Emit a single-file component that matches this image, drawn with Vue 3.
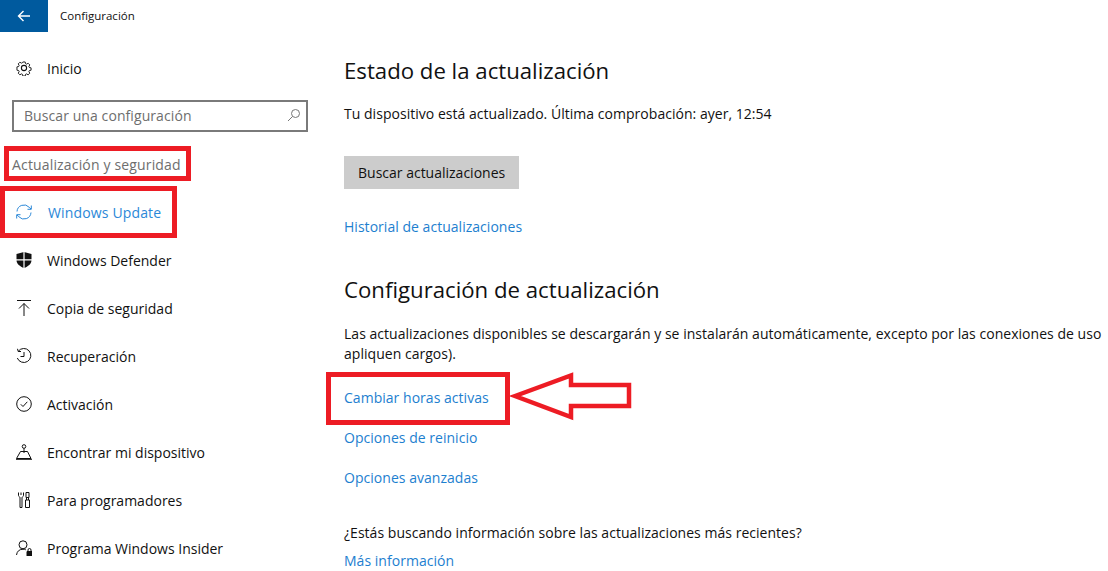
<script setup>
const navItems = [
  { label: 'Windows Update', icon: 'update', active: true },
  { label: 'Windows Defender', icon: 'shield' },
  { label: 'Copia de seguridad', icon: 'backup' },
  { label: 'Recuperación', icon: 'history' },
  { label: 'Activación', icon: 'check' },
  { label: 'Encontrar mi dispositivo', icon: 'find' },
  { label: 'Para programadores', icon: 'dev' },
  { label: 'Programa Windows Insider', icon: 'insider' }
]
</script>

<template>
  <div class="page">
    <header class="titlebar">
      <button class="back">
        <svg width="16" height="16" viewBox="0 0 16 16" fill="none" stroke="#fff" stroke-width="1.4">
          <path d="M14 8H2.500M7.500 3 2.500 8 7.500 13" />
        </svg>
      </button>
      <span class="title">Configuración</span>
    </header>

    <div class="content">
      <aside class="sidebar">
        <div class="home">
          <svg class="icon" viewBox="0 0 16 16" fill="none" stroke="#111" stroke-width="1.100">
            <path d="M6.600 .8h2.800l.4 2 1.300.6 1.800-1.100 2 2-1.100 1.800.6 1.300 2 .4v2.800l-2 .4-.6 1.300 1.100 1.800-2 2-1.800-1.100-1.300.6-.4 2H6.600l-.4-2-1.300-.6-1.800 1.100-2-2 1.100-1.800-.6-1.300-2-.4V6.600l2-.4.6-1.300-1.100-1.800 2-2 1.800 1.100 1.300-.6z" transform="translate(1.300 1.300) scale(.84)" />
            <circle cx="8" cy="8" r="2.600" />
          </svg>
          <span>Inicio</span>
        </div>

        <div class="search">
          <span>Buscar una configuración</span>
          <svg width="14" height="14" viewBox="0 0 14 14" fill="none" stroke="#777" stroke-width="1">
            <circle cx="8.500" cy="5.500" r="4" />
            <path d="M5.500 8.500 1 13" />
          </svg>
        </div>

        <div class="section-label">Actualización y seguridad</div>

        <nav class="nav">
          <div v-for="item in navItems" :key="item.label" class="nav-item" :class="{ active: item.active }">
            <svg class="icon" viewBox="0 0 16 16" fill="none" stroke="currentColor" stroke-width="1">
              <g v-if="item.icon === 'update'">
                <path d="M1 7.500A7 7 0 0 1 13.200 3.300L15 5" />
                <path d="M15.300 1.500V5.300H11.500" />
                <path d="M15 8.500A7 7 0 0 1 2.800 12.700L1 11" />
                <path d="M.7 14.500V10.700H4.500" />
              </g>
              <g v-else-if="item.icon === 'shield'">
                <path fill="currentColor" stroke="none" d="M8 0 15.500 2V8C15.500 12 12 14.500 8 16 4 14.500.5 12 .5 8V2Z" />
                <path stroke="#fff" stroke-width="1.200" d="M8 0V16M0 7.800H16" />
              </g>
              <path v-else-if="item.icon === 'backup'" d="M1 .5H15M8 16V3.500M3 8.500 8 3.500 13 8.500" />
              <g v-else-if="item.icon === 'history'">
                <path d="M2.300 3.200A7 7 0 1 1 1.300 10" />
                <path d="M1.500 .8 2.200 3.500 5 3.500M8 4V8.500H4.500" />
              </g>
              <g v-else-if="item.icon === 'check'">
                <circle cx="8" cy="8" r="7.300" />
                <path d="M4.800 8.300 7 10.500 11.300 5.800" />
              </g>
              <g v-else-if="item.icon === 'find'">
                <circle cx="8" cy="2.500" r="1.800" />
                <path d="M8 4.300V9M4.500 7.500H11.500L15 14.500H.5ZM0 15.300H16" />
              </g>
              <g v-else-if="item.icon === 'dev'">
                <path d="M3 .5V3.500C3 4.800 4.500 4.800 4.500 5.500V15.500H6.500V5.500C6.500 4.800 8 4.800 8 3.500V.5M5.500 .5V3" transform="translate(-.5 0)" />
                <path d="M10 .5H13V5.500H10ZM10.500 5.500V8M12.500 5.500V8M9.500 8H13.500V15.500H9.500Z" />
              </g>
              <g v-else>
                <circle cx="7" cy="4.800" r="4" />
                <path d="M.5 15A6.800 6.800 0 0 1 7 9.200C8 9.200 9 9.400 9.800 9.800" />
                <path d="M11 11.500H16V16H11Z" fill="currentColor" />
                <path d="M12 11.500V10A1.500 1.500 0 0 1 15 10V11.500" />
              </g>
            </svg>
            <span>{{ item.label }}</span>
          </div>
        </nav>
      </aside>

      <main class="main">
        <h2 class="first">Estado de la actualización</h2>
        <p class="status">Tu dispositivo está actualizado. Última comprobación: ayer, 12:54</p>
        <button class="check-btn">Buscar actualizaciones</button>
        <a class="link history-link">Historial de actualizaciones</a>

        <h2 class="second">Configuración de actualización</h2>
        <p class="desc">Las actualizaciones disponibles se descargarán y se instalarán automáticamente, excepto por las conexiones de uso<br />apliquen cargos).</p>
        <div class="links">
          <a class="link">Cambiar horas activas</a>
          <a class="link">Opciones de reinicio</a>
          <a class="link">Opciones avanzadas</a>
        </div>
        <p class="more">¿Estás buscando información sobre las actualizaciones más recientes?</p>
        <a class="link">Más información</a>
      </main>
    </div>

    <div class="mark mark-label"></div>
    <div class="mark mark-update"></div>
    <div class="mark mark-hours"></div>
    <svg class="arrow" width="122" height="50" viewBox="0 0 122 50" fill="none" stroke="#ed1c24" stroke-width="4.500">
      <path d="M5 24 61 3.500V13H119V34H61V45Z" />
    </svg>
  </div>
</template>

<style>
html, body {
  background: #fff;
  overflow: hidden;
}
</style>

<style scoped>
.page {
  position: relative;
  width: 1108px;
  height: 571px;
  overflow: hidden;
  background: #fff;
  color: #111;
  font-family: "Open Sans", "Liberation Sans", sans-serif;
  font-size: 14px;
}
.titlebar {
  display: flex;
  align-items: center;
  height: 32px;
}
.back {
  display: flex;
  align-items: center;
  justify-content: center;
  width: 48px;
  height: 32px;
  padding: 0;
  border: 0;
  background: #005a9e;
}
.title {
  margin: -2px 0 0 12px;
  font-size: 11.500px;
}
.content {
  display: flex;
}
.sidebar {
  flex: none;
  width: 320px;
}
.home {
  display: flex;
  align-items: center;
  gap: 15px;
  height: 48px;
  margin-top: 12px;
  padding-left: 16px;
}
.icon {
  flex: none;
  width: 16px;
  height: 16px;
}
.search {
  display: flex;
  align-items: center;
  justify-content: space-between;
  box-sizing: border-box;
  width: 296px;
  height: 32px;
  margin: 8px 0 0 12px;
  padding: 0 5px 2px 10px;
  border: 2px solid #7a7a7a;
  color: #6e6e6e;
  letter-spacing: .08px;
}
.section-label {
  height: 32px;
  margin-top: 17px;
  padding-left: 12px;
  line-height: 32px;
  color: #6e6e6e;
  letter-spacing: .16px;
}
.nav {
  margin-top: 7px;
}
.nav-item {
  display: flex;
  align-items: center;
  gap: 15px;
  height: 48px;
  padding-left: 16px;
}
.nav-item.active {
  gap: 16px;
  color: #2b88d8;
  letter-spacing: .15px;
}
.main {
  display: flex;
  flex-direction: column;
  align-items: flex-start;
  padding-left: 24px;
  white-space: nowrap;
  letter-spacing: .03px;
}
h2 {
  margin: 0;
  font-size: 22.200px;
  font-weight: 400;
  line-height: 30px;
  letter-spacing: 0;
}
.first {
  margin-top: 24px;
}
.status {
  margin: 18px 0 0;
  line-height: 20px;
}
.check-btn {
  height: 33px;
  margin-top: 32px;
  padding: 0 14px;
  border: 0;
  background: #cccccc;
  color: #111;
  font: inherit;
}
.link {
  color: #1d80cf;
  line-height: 20px;
}
.history-link {
  margin-top: 28px;
}
.second {
  margin-top: 38px;
}
.desc {
  margin: 19px 0 0;
  line-height: 20px;
}
.links {
  display: flex;
  flex-direction: column;
  gap: 20px;
  margin-top: 24px;
}
.more {
  margin: 35px 0 0;
  line-height: 20px;
}
.more + .link {
  margin-top: 8px;
}
.mark {
  position: absolute;
  box-sizing: border-box;
  border: 5px solid #ed1c24;
}
.mark-label {
  left: 4px;
  top: 146px;
  width: 187px;
  height: 35px;
}
.mark-update {
  left: 0;
  top: 186px;
  width: 177px;
  height: 52px;
}
.mark-hours {
  left: 326px;
  top: 372px;
  width: 184px;
  height: 53px;
}
.arrow {
  position: absolute;
  left: 510px;
  top: 372px;
}
</style>
